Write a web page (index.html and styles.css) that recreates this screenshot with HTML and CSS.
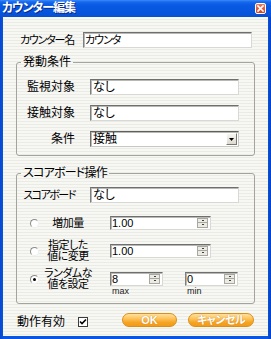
FILE: index.html
```html
<!DOCTYPE html>
<html lang="ja">
<head>
<meta charset="utf-8">
<link rel="stylesheet" href="styles.css">
</head>
<body>
<div class="window">
  <div class="titlebar">
    <span class="title">カウンター編集</span>
    <span class="close"><svg width="9" height="9" viewBox="0 0 9 9"><path d="M2 2L7 7M7 2L2 7" stroke="#fff" stroke-width="1.6" stroke-linecap="square"/></svg></span>
  </div>
  <div class="client">
    <div class="name-row">
      <span class="name-label">カウンター名</span>
      <div class="field name-field">カウンタ</div>
    </div>

    <fieldset class="group trigger">
      <legend>発動条件</legend>
      <div class="form-grid">
        <span class="lbl">監視対象</span><div class="field">なし</div>
        <span class="lbl">接触対象</span><div class="field">なし</div>
        <span class="lbl">条件</span>
        <div class="field select">接触<span class="drop-btn"><svg width="5" height="3" viewBox="0 0 5 3"><path d="M0 0H5L2.5 3Z" fill="#000"/></svg></span></div>
      </div>
    </fieldset>

    <fieldset class="group score">
      <legend>スコアボード操作</legend>
      <div class="form-grid">
        <span class="lbl kana">スコアボード</span><div class="field">なし</div>
      </div>
      <div class="op-row first">
        <span class="radio"></span>
        <span class="op-label">増加量</span>
        <div class="field spin wide">1.00<span class="spinner"><i></i><i></i></span></div>
      </div>
      <div class="op-row">
        <span class="radio"></span>
        <span class="op-label"><span>指定した</span><span>値に変更</span></span>
        <div class="field spin wide">1.00<span class="spinner"><i></i><i></i></span></div>
      </div>
      <div class="op-row">
        <span class="radio checked"></span>
        <span class="op-label"><span>ランダムな</span><span>値を設定</span></span>
        <div class="pair">
          <div class="pair-item">
            <div class="field spin narrow">8<span class="spinner"><i></i><i></i></span></div>
            <span class="small-lbl">max</span>
          </div>
          <div class="pair-item">
            <div class="field spin narrow">0<span class="spinner"><i></i><i></i></span></div>
            <span class="small-lbl">min</span>
          </div>
        </div>
      </div>
    </fieldset>

    <div class="footer">
      <span class="enable-label">動作有効</span>
      <span class="checkbox"><svg width="8" height="8" viewBox="0 0 8 8"><path d="M1 3.5L3 5.5L7 1.5" stroke="#000" stroke-width="1.6" fill="none"/></svg></span>
      <span class="btn ok">OK</span>
      <span class="btn cancel">キャンセル</span>
    </div>
  </div>
</div>
</body>
</html>
```

FILE: styles.css
```css
* { box-sizing: border-box; }
html, body { margin: 0; padding: 0; }
body {
  width: 271px;
  height: 339px;
  overflow: hidden;
  font-family: "Liberation Sans", "Noto Sans CJK JP", sans-serif;
  font-size: 12px;
  color: #000;
  font-feature-settings: "palt";
  white-space: nowrap;
}
.window {
  width: 271px;
  height: 339px;
  display: flex;
  flex-direction: column;
  background: linear-gradient(to right, #0848d0, #0a56e2 4px, #0a56e2 calc(100% - 4px), #0640c4);
  padding: 0 3px 3px;
}
.titlebar {
  height: 17px;
  flex: none;
  margin: 0 -3px;
  padding: 0 5px 0 2px;
  display: flex;
  align-items: center;
  justify-content: space-between;
  background: linear-gradient(#3a8af6 0, #1668ee 2px, #0a5ae4 5px, #0654dc 13px, #0a4fd2 17px);
}
.title {
  color: #fff;
  font-weight: bold;
  font-size: 12px;
  line-height: 17px;
  letter-spacing: -1px;
  text-shadow: 1px 1px 0 #0a2a8a;
}
.close {
  width: 11px;
  height: 11px;
  background: linear-gradient(#ec7a5c, #d8401f);
  border: 1px solid #fff;
  border-radius: 2px;
  display: flex;
  align-items: center;
  justify-content: center;
}
.client {
  flex: 1;
  min-height: 0;
  overflow: hidden;
  background: repeating-linear-gradient(to bottom, #f7f7f4 0, #f7f7f4 2px, #ebebe6 2px, #ebebe6 3px);
  padding: 15px 14px 0 13px;
  display: flex;
  flex-direction: column;
}
.name-row {
  display: flex;
  align-items: center;
  height: 16px;
  flex: none;
}
.name-label {
  margin-left: 4px;
  width: 63px;
  line-height: 14px;
  font-size: 11px;
  letter-spacing: -1.2px;
}
.field {
  height: 16px;
  background: #fff;
  border: 1px solid;
  border-color: #6f6f6f #d8d8d4 #d8d8d4 #7f7f7f;
  box-shadow: inset 1px 1px 0 #b8b8b4;
  padding-left: 2px;
  line-height: 14px;
  font-size: 12px;
  overflow: hidden;
}
.name-field { width: 169px; font-size: 11px; letter-spacing: -1px; padding-left: 1px; }

.group {
  margin: 0;
  width: 239px;
  flex: none;
  border: 1px solid #a4a49c;
  border-radius: 3px;
  padding: 0 0 8px 0;
}
.group legend {
  margin-left: 4px;
  padding: 0 2px;
  line-height: 14px;
  height: 14px;
}
.score legend { letter-spacing: -0.8px; }
.trigger {
  margin-top: 7px;
  padding-top: 10px;
}
.score {
  margin-top: 10px;
  padding-top: 7px;
  padding-bottom: 7px;
}
.form-grid {
  display: grid;
  grid-template-columns: 58px 149px;
  grid-auto-rows: 16px;
  column-gap: 15px;
  row-gap: 10px;
  align-items: center;
}
.lbl {
  justify-self: end;
  line-height: 14px;
}
.lbl.kana { font-size: 11px; letter-spacing: -1.5px; }
.select {
  display: flex;
  align-items: center;
  justify-content: space-between;
  border-color: #5f5f5f #c8c8c4 #c8c8c4 #6f6f6f;
}
.drop-btn {
  width: 11px;
  height: 12px;
  margin-right: 1px;
  background: linear-gradient(#f6f5f0, #dcdad0);
  border: 1px solid;
  border-color: #fff #7a7a74 #7a7a74 #fff;
  display: flex;
  align-items: center;
  justify-content: center;
}

.op-row {
  display: flex;
  align-items: flex-start;
  margin-top: 14px;
  padding-left: 13px;
}
.op-row.first { margin-top: 13px; }
.radio {
  width: 9px;
  height: 9px;
  margin-top: 3px;
  flex: none;
  border-radius: 50%;
  border: 1px solid;
  border-color: #8a8a8a #f0f0f0 #f0f0f0 #8a8a8a;
  background: #fff;
  display: flex;
  align-items: center;
  justify-content: center;
}
.radio.checked::after {
  content: "";
  width: 3px;
  height: 3px;
  border-radius: 50%;
  background: #000;
}
.op-label {
  width: 58px;
  height: 14px;
  flex: none;
  display: flex;
  flex-direction: column;
  align-items: center;
  justify-content: center;
  font-size: 11px;
  line-height: 11px;
  letter-spacing: -0.5px;
  margin-right: 13px;
}
.op-label span { display: block; height: 11px; }
.spin {
  height: 14px;
  display: flex;
  align-items: center;
  justify-content: space-between;
  line-height: 12px;
  font-size: 11px;
  padding-left: 1px;
}
.wide { width: 101px; }
.narrow { width: 53px; }
.spinner {
  display: flex;
  flex-direction: column;
  margin-right: 2px;
}
.spinner i {
  width: 11px;
  height: 5px;
  background: #ecebe3;
  border: 1px solid #a8a8a0;
  position: relative;
}
.spinner i + i { border-top: none; }
.spinner i::after {
  content: "";
  position: absolute;
  left: 4px;
  top: 1px;
  width: 2px;
  height: 1px;
  background: #404040;
}
.pair {
  display: flex;
  gap: 22px;
}
.pair-item {
  display: flex;
  flex-direction: column;
}
.small-lbl {
  font-size: 9px;
  line-height: 9px;
  height: 9px;
  margin-left: 2px;
  margin-top: 1px;
  color: #222;
}

.footer {
  display: flex;
  align-items: center;
  height: 14px;
  flex: none;
  margin-top: 9px;
}
.enable-label {
  margin-left: 1px;
  width: 62px;
  line-height: 14px;
  margin-top: 3px;
}
.checkbox {
  width: 10px;
  height: 10px;
  flex: none;
  border: 1px solid #3c3c3c;
  background: #fff;
  display: flex;
  align-items: center;
  justify-content: center;
  margin-top: 3px;
}
.btn {
  height: 14px;
  flex: none;
  border-radius: 7px;
  border: 1px solid #dc8e16;
  background: linear-gradient(#ffe1a0 0, #fcc257 40%, #f6a424 70%, #f29a18 100%);
  color: #fff;
  font-size: 11px;
  font-weight: bold;
  line-height: 12px;
  display: flex;
  align-items: center;
  justify-content: center;
  text-shadow: 0 0 1px #c07010;
}
.ok { width: 55px; margin-left: 34px; }
.cancel { width: 66px; margin-left: 11px; letter-spacing: -0.5px; }
```
